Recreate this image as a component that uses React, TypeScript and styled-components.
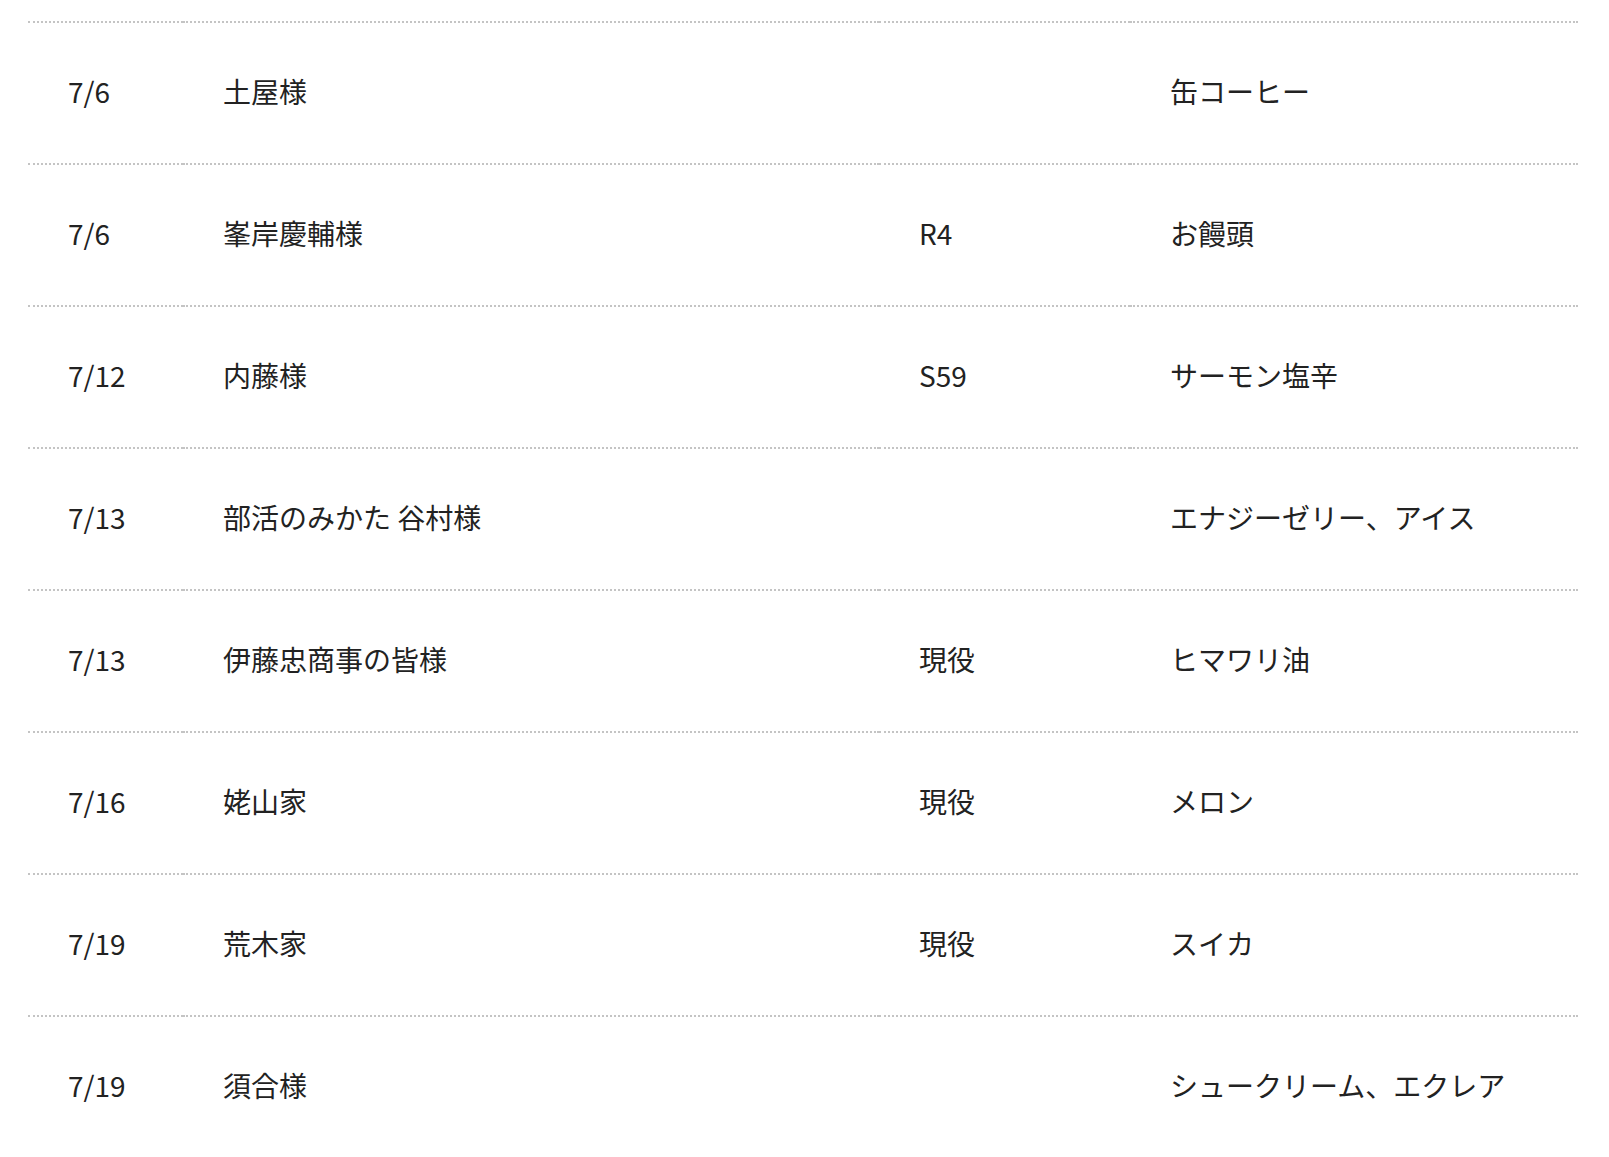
import React from 'react'
import styled, { createGlobalStyle } from 'styled-components'

const GlobalStyle = createGlobalStyle`
  body {
    margin: 0;
    background: #fff;
    font-family: "Noto Sans CJK JP", "Noto Sans", sans-serif;
    color: #222;
  }
`

const Wrapper = styled.div`
  padding: 21px 0 0 28px;
`

const Table = styled.table`
  width: 1550px;
  table-layout: fixed;
  border-collapse: separate;
  border-spacing: 0;
  font-size: 28px;
  line-height: 42px;
`

const Col = styled.col<{ $w: number }>`
  width: ${(p) => p.$w}px;
`

const Cell = styled.td`
  box-sizing: border-box;
  padding: 47px 0 51px 40px;
  border-top: 2px dotted #c4c4c4;
  text-align: left;
  vertical-align: middle;
  white-space: nowrap;
  overflow: hidden;
`

type Gift = {
  date: string
  name: string
  era: string
  item: string
}

const gifts: Gift[] = [
  { date: '7/6', name: '土屋様', era: '', item: '缶コーヒー' },
  { date: '7/6', name: '峯岸慶輔様', era: 'R4', item: 'お饅頭' },
  { date: '7/12', name: '内藤様', era: 'S59', item: 'サーモン塩辛' },
  { date: '7/13', name: '部活のみかた 谷村様', era: '', item: 'エナジーゼリー、アイス' },
  { date: '7/13', name: '伊藤忠商事の皆様', era: '現役', item: 'ヒマワリ油' },
  { date: '7/16', name: '姥山家', era: '現役', item: 'メロン' },
  { date: '7/19', name: '荒木家', era: '現役', item: 'スイカ' },
  { date: '7/19', name: '須合様', era: '', item: 'シュークリーム、エクレア' },
]

const widths = [155, 696, 251, 448]

export default function App() {
  return (
    <>
      <GlobalStyle />
      <Wrapper>
        <Table>
          <colgroup>
            {widths.map((w, i) => (
              <Col key={i} $w={w} />
            ))}
          </colgroup>
          <tbody>
            {gifts.map((g, i) => (
              <tr key={i}>
                <Cell>{g.date}</Cell>
                <Cell>{g.name}</Cell>
                <Cell>{g.era}</Cell>
                <Cell>{g.item}</Cell>
              </tr>
            ))}
          </tbody>
        </Table>
      </Wrapper>
    </>
  )
}
